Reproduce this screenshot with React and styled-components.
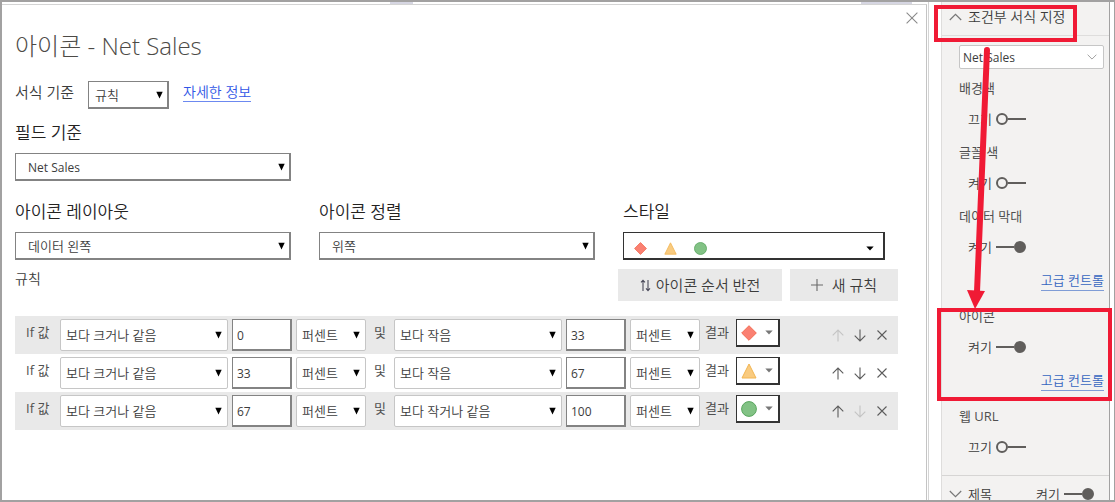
import React from "react";
import styled, { createGlobalStyle } from "styled-components";

const GlobalStyle = createGlobalStyle`
  *, *::before, *::after { box-sizing: border-box; }
  body {
    margin: 0;
    background: #fff;
    color: #3c3c3c;
    font-family: "Open Sans", "Noto Sans CJK KR", sans-serif;
    font-size: 13px;
    font-weight: 350;
    line-height: 20px;
  }
  button, input, select { font: inherit; color: inherit; margin: 0; }
`;

const Frame = styled.div`
  display: flex;
  height: 100vh;
  overflow: hidden;
  border: 2px solid #a2a1a1;
  border-right-width: 1px;
`;

const Workspace = styled.div`
  flex: 1;
  min-width: 0;
  display: flex;
  flex-direction: column;
  margin-right: 12px;
  border-right: 1px solid #d4d4d4;
`;

const CanvasStrip = styled.div`
  flex: none;
  display: flex;
  justify-content: space-between;
  height: 2px;
  padding: 0 16px 0 388px;
`;

const StripMark = styled.span`
  width: ${(p) => p.$width}px;
  background: #d6d6e2;
`;

const Dialog = styled.main`
  flex: 1;
  display: flex;
  flex-direction: column;
  align-items: flex-start;
  position: relative;
  margin-right: 1px;
  padding: 25px 28px 0 13px;
  border-top: 1px solid #d4d4d4;
  border-right: 1px solid #c4c4c4;
`;

const CloseButton = styled.button`
  position: absolute;
  top: 3px;
  right: 4px;
  display: grid;
  place-items: center;
  width: 20px;
  height: 20px;
  padding: 0;
  border: 0;
  background: none;
  color: #8a8a8a;
`;

const Title = styled.h1`
  margin: 0;
  font-size: 24px;
  font-weight: 300;
  line-height: 32px;
  color: #4c4a46;
`;

const BasisRow = styled.div`
  display: flex;
  align-items: flex-start;
  gap: 14px;
  margin-top: 19px;
`;

const BasisLabel = styled.label`
  font-size: 15px;
  line-height: 22px;
`;

const MoreLink = styled.a`
  padding-top: 2px;
  color: #2f55e6;
  font-size: 14px;
  line-height: 18px;
  text-decoration: none;
  border-bottom: 1px solid #6c89f0;
`;

const Field = styled.div`
  display: flex;
  flex-direction: column;
  gap: 8px;
  width: ${(p) => p.$width}px;
  margin-top: ${(p) => p.$top || 0}px;
`;

const FieldLabel = styled.label`
  font-size: 17px;
  line-height: 24px;
  color: #24221f;
`;

const FieldRow = styled.div`
  display: flex;
  gap: 28px;
  margin-top: 19px;
`;

const SelectBox = styled.span`
  display: inline-grid;
  align-items: center;
  width: ${(p) => (p.$width ? `${p.$width}px` : "100%")};
  height: ${(p) => p.$height || 28}px;
  & > * { grid-area: 1 / 1; }
  & > svg { justify-self: end; margin-right: ${(p) => p.$arrowInset || 6}px; pointer-events: none; }
`;

const NativeSelect = styled.select`
  appearance: none;
  width: 100%;
  height: 100%;
  padding: ${(p) => (p.$latin ? 2 : 0)}px 20px 0 ${(p) => p.$indent}px;
  border: ${(p) => (p.$light ? "1px solid #c6c6c6" : "2px solid #838383")};
  border-width: ${(p) => (p.$light ? "1px" : "1px 2px 2px 1px")};
  border-radius: ${(p) => (p.$light ? 2 : 0)}px;
  background: #fff;
  font-size: ${(p) => (p.$latin ? 12 : 13)}px;
  font-weight: ${(p) => (p.$latin ? 400 : 350)};
`;

const IconSelect = styled.button`
  display: flex;
  align-items: center;
  gap: ${(p) => p.$gap}px;
  width: ${(p) => p.$width}px;
  height: 28px;
  padding: ${(p) => p.$padding};
  border: 2px solid #333;
  border-width: 1px 2px 2px 1px;
  background: #fff;
  & > svg:last-child { margin-left: auto; }
`;

const RulesBar = styled.div`
  display: flex;
  align-items: flex-start;
  align-self: stretch;
  gap: 8px;
  margin-top: 9px;
`;

const RulesTitle = styled.h2`
  margin: 0 auto 0 0;
  font-size: 14px;
  font-weight: 350;
  line-height: 20px;
`;

const ActionButton = styled.button`
  display: flex;
  align-items: center;
  justify-content: center;
  gap: ${(p) => p.$gap}px;
  width: ${(p) => p.$width}px;
  height: 32px;
  padding: 0;
  border: 0;
  background: #e9e9e9;
  font-size: 15px;
`;

const RuleList = styled.ul`
  align-self: stretch;
  margin: 15px 0 0;
  padding: 0;
  list-style: none;
`;

const RuleRow = styled.li`
  display: flex;
  align-items: flex-start;
  gap: 4px;
  height: 38px;
  padding: 3px 8px 3px 11px;
  background: #fff;
  &:nth-child(odd) { background: #e9e9e9; }
`;

const RuleWord = styled.span`
  flex: none;
  width: ${(p) => p.$width}px;
  padding: 3px 0 0 ${(p) => p.$indent || 0}px;
  color: #505050;
  font-weight: 400;
`;

const ValueInput = styled.input`
  width: 60px;
  height: 32px;
  padding: 2px 4px 0;
  border: 2px solid #838383;
  border-width: 1px 2px 2px 1px;
  background: #fff;
  font-size: 12px;
  font-weight: 400;
`;

const RuleActions = styled.div`
  display: flex;
  align-items: center;
  gap: 6px;
  height: 32px;
  margin-left: auto;
`;

const RuleAction = styled.button`
  display: grid;
  place-items: center;
  width: 16px;
  height: 20px;
  padding: 0;
  border: 0;
  background: none;
  color: #5c5c5c;
  &:disabled { color: #c4c4c4; }
`;

const Pane = styled.aside`
  flex: none;
  position: relative;
  width: 169px;
  margin-right: 4px;
  border-left: 1px solid #dedddc;
  border-right: 1px solid #a2a1a1;
  background: #f3f2f1;
`;

const PaneHeader = styled.div`
  display: flex;
  align-items: center;
  gap: 6px;
  height: 34px;
  padding: 0 15px 3px 7px;
  border-bottom: ${(p) => (p.$last ? 0 : 1)}px solid #dedddc;
  border-top: ${(p) => (p.$last ? 1 : 0)}px solid #d6d5d4;
  margin-top: ${(p) => (p.$last ? 5 : 0)}px;
  padding-top: ${(p) => (p.$last ? 6 : 0)}px;
  font-size: ${(p) => (p.$last ? 13 : 14)}px;
  & > label { margin-left: auto; }
`;

const PaneSelect = styled.div`
  display: flex;
  margin: 9px 5px 9px 17px;
`;

const Section = styled.section`
  display: flex;
  flex-direction: column;
  align-items: flex-start;
  gap: 11px;
  padding: 0 5px 13px 17px;
`;

const SectionTitle = styled.h3`
  margin: 0;
  color: #505050;
  font-size: 13px;
  font-weight: 400;
  line-height: 20px;
`;

const SwitchLabel = styled.label`
  display: flex;
  align-items: center;
  gap: 4px;
  height: 20px;
  padding-left: ${(p) => (p.$flush ? 0 : 9)}px;
`;

const Switch = styled.input`
  appearance: none;
  display: flex;
  flex-direction: row;
  align-items: center;
  width: 30px;
  height: 12px;
  margin: 0;
  &::before {
    content: "";
    width: 12px;
    height: 12px;
    border: 2px solid #605e5c;
    border-radius: 50%;
  }
  &::after {
    content: "";
    flex: 1;
    height: 2px;
    background: #605e5c;
  }
  &:checked { flex-direction: row-reverse; }
  &:checked::before { background: #605e5c; }
`;

const AdvancedLink = styled.a`
  align-self: flex-end;
  height: 25px;
  padding-top: 2px;
  color: #3565c0;
  text-decoration: none;
  & > span {
    display: block;
    border-bottom: 1px solid #7f9cd6;
  }
`;

const Highlight = styled.div`
  position: absolute;
  top: ${(p) => p.$top}px;
  left: ${(p) => p.$left}px;
  width: ${(p) => p.$width}px;
  height: ${(p) => p.$height}px;
  border: 4px solid #f01a35;
  pointer-events: none;
`;

const PointerArrow = styled.svg`
  position: absolute;
  top: 44px;
  left: 22px;
  pointer-events: none;
`;

const DownTriangle = () => (
  <svg width="7" height="8" viewBox="0 0 7 8" aria-hidden="true">
    <path d="M0.3 0.8h6.4L3.5 7.4z" fill="#000" />
  </svg>
);

const Caret = ({ color = "#000" }) => (
  <svg width="8" height="5" viewBox="0 0 8 5" aria-hidden="true">
    <path d="M0.3 0.5h7.4L4 4.5z" fill={color} />
  </svg>
);

const Chevron = ({ up, width = 13, color = "#777" }) => (
  <svg width={width} height="8" viewBox="0 0 13 8" fill="none" stroke={color} strokeWidth="1.2" aria-hidden="true">
    <path d={up ? "M0.8 7L6.5 1.3 12.2 7" : "M0.8 1L6.5 6.7 12.2 1"} />
  </svg>
);

const Cross = ({ size = 10 }) => (
  <svg width={size} height={size} viewBox="0 0 10 10" stroke="currentColor" strokeWidth={size > 10 ? 0.9 : 1.1} aria-hidden="true">
    <path d="M0.5 0.5l9 9M9.5 0.5l-9 9" />
  </svg>
);

const Arrow = ({ down }) => (
  <svg width="12" height="13" viewBox="0 0 12 13" fill="none" stroke="currentColor" strokeWidth="1.1" aria-hidden="true">
    <path d={down ? "M6 0.5v11.5M0.7 6.7L6 12l5.3-5.3" : "M6 12.5V1M0.7 6.3L6 1l5.3 5.3"} />
  </svg>
);

const ReverseIcon = () => (
  <svg width="11" height="13" viewBox="0 0 11 13" fill="none" stroke="#4a4a5a" strokeWidth="1.1" aria-hidden="true">
    <path d="M3 12V1.2M1 3.4L3 1.2l2 2.2M8 1v10.6M6 9.4l2 2.2 2-2.2" />
  </svg>
);

const PlusIcon = () => (
  <svg width="12" height="12" viewBox="0 0 12 12" stroke="#6a6a6a" strokeWidth="1.1" aria-hidden="true">
    <path d="M6 0v12M0 6h12" />
  </svg>
);

const Mark = ({ kind, size }) => (
  <svg width={size} height={size} viewBox="0 0 16 16" aria-hidden="true">
    {kind === "diamond" && <path d="M8 0.7L15.3 8 8 15.3 0.7 8z" fill="#fa8072" stroke="#f26a50" />}
    {kind === "triangle" && <path d="M8 1l7 14H1z" fill="#f9cb80" stroke="#f2b552" />}
    {kind === "circle" && <circle cx="8" cy="8" r="7.4" fill="#82c285" stroke="#5aa65f" />}
  </svg>
);

function Select({ id, label, value, width, height, indent = 12, light, latin }) {
  return (
    <SelectBox $width={width} $height={height}>
      <NativeSelect id={id} aria-label={label} $indent={indent} $light={light} $latin={latin} defaultValue={value}>
        <option>{value}</option>
      </NativeSelect>
      <DownTriangle />
    </SelectBox>
  );
}

function Rule({ from, upper, to, mark, first, last }) {
  return (
    <RuleRow>
      <RuleWord $width={30}>If 값</RuleWord>
      <Select light label="하한 조건" value="보다 크거나 같음" width={168} height={32} indent={5} />
      <ValueInput aria-label="하한 값" defaultValue={from} />
      <Select light label="하한 단위" value="퍼센트" width={70} height={32} indent={5} />
      <RuleWord $width={20} $indent={4}>및</RuleWord>
      <Select light label="상한 조건" value={upper} width={168} height={32} indent={5} />
      <ValueInput aria-label="상한 값" defaultValue={to} />
      <Select light label="상한 단위" value="퍼센트" width={70} height={32} indent={5} />
      <RuleWord $width={28} $indent={1}>결과</RuleWord>
      <IconSelect type="button" aria-haspopup="listbox" aria-label="결과 아이콘" $width={44} $gap={0} $padding="0 5px 0 4px">
        <Mark kind={mark} size={16} />
        <Caret color="#777" />
      </IconSelect>
      <RuleActions>
        <RuleAction type="button" aria-label="위로 이동" disabled={first}><Arrow /></RuleAction>
        <RuleAction type="button" aria-label="아래로 이동" disabled={last}><Arrow down /></RuleAction>
        <RuleAction type="button" aria-label="삭제"><Cross /></RuleAction>
      </RuleActions>
    </RuleRow>
  );
}

function PaneSection({ title, state, on, advanced }) {
  return (
    <Section>
      <SectionTitle>{title}</SectionTitle>
      <SwitchLabel>
        {state}
        <Switch type="checkbox" role="switch" defaultChecked={on} />
      </SwitchLabel>
      {advanced && <AdvancedLink href="#advanced"><span>고급 컨트롤</span></AdvancedLink>}
    </Section>
  );
}

export default function App() {
  return (
    <>
      <GlobalStyle />
      <Frame>
        <Workspace>
          <CanvasStrip>
            <StripMark $width={23} />
            <StripMark $width={51} />
          </CanvasStrip>
          <Dialog>
            <CloseButton type="button" aria-label="닫기"><Cross size={12} /></CloseButton>
            <Title>아이콘 - Net Sales</Title>
            <BasisRow>
              <BasisLabel htmlFor="basis">서식 기준</BasisLabel>
              <Select id="basis" value="규칙" width={81} indent={6} />
              <MoreLink href="#more">자세한 정보</MoreLink>
            </BasisRow>
            <Field $width={276} $top={12}>
              <FieldLabel htmlFor="field">필드 기준</FieldLabel>
              <Select id="field" value="Net Sales" latin />
            </Field>
            <FieldRow>
              <Field $width={276}>
                <FieldLabel htmlFor="layout">아이콘 레이아웃</FieldLabel>
                <Select id="layout" value="데이터 왼쪽" />
              </Field>
              <Field $width={276}>
                <FieldLabel htmlFor="align">아이콘 정렬</FieldLabel>
                <Select id="align" value="위쪽" />
              </Field>
              <Field $width={262}>
                <FieldLabel htmlFor="style">스타일</FieldLabel>
                <IconSelect id="style" type="button" aria-haspopup="listbox" $width={262} $gap={17} $padding="6px 9px 0 10px">
                  <Mark kind="diamond" size={13} />
                  <Mark kind="triangle" size={13} />
                  <Mark kind="circle" size={13} />
                  <Caret />
                </IconSelect>
              </Field>
            </FieldRow>
            <RulesBar>
              <RulesTitle>규칙</RulesTitle>
              <ActionButton type="button" $width={164} $gap={5}><ReverseIcon />아이콘 순서 반전</ActionButton>
              <ActionButton type="button" $width={108} $gap={9}><PlusIcon />새 규칙</ActionButton>
            </RulesBar>
            <RuleList>
              <Rule from="0" upper="보다 작음" to="33" mark="diamond" first />
              <Rule from="33" upper="보다 작음" to="67" mark="triangle" />
              <Rule from="67" upper="보다 작거나 같음" to="100" mark="circle" last />
            </RuleList>
          </Dialog>
        </Workspace>
        <Pane>
          <PaneHeader><Chevron up />조건부 서식 지정</PaneHeader>
          <PaneSelect>
            <SelectBox $height={24} $arrowInset={7}>
              <NativeSelect aria-label="필드" $indent={3} $light $latin defaultValue="Net Sales">
                <option>Net Sales</option>
              </NativeSelect>
              <Chevron width={10} color="#999" />
            </SelectBox>
          </PaneSelect>
          <PaneSection title="배경색" state="끄기" />
          <PaneSection title="글꼴 색" state="켜기" />
          <PaneSection title="데이터 막대" state="켜기" on advanced />
          <PaneSection title="아이콘" state="켜기" on advanced />
          <PaneSection title="웹 URL" state="끄기" />
          <PaneHeader $last>
            <Chevron />제목
            <SwitchLabel $flush>켜기<Switch type="checkbox" role="switch" defaultChecked /></SwitchLabel>
          </PaneHeader>
          <PointerArrow width="32" height="264" viewBox="0 0 32 264" aria-hidden="true">
            <path d="M23 4L13 246" stroke="#f01a35" strokeWidth="6" strokeLinecap="round" />
            <path d="M3 244l18 1-10 18z" fill="#f01a35" />
          </PointerArrow>
          <Highlight $top={3} $left={-8} $width={143} $height={37} />
          <Highlight $top={306} $left={-5} $width={175} $height={93} />
        </Pane>
      </Frame>
    </>
  );
}
